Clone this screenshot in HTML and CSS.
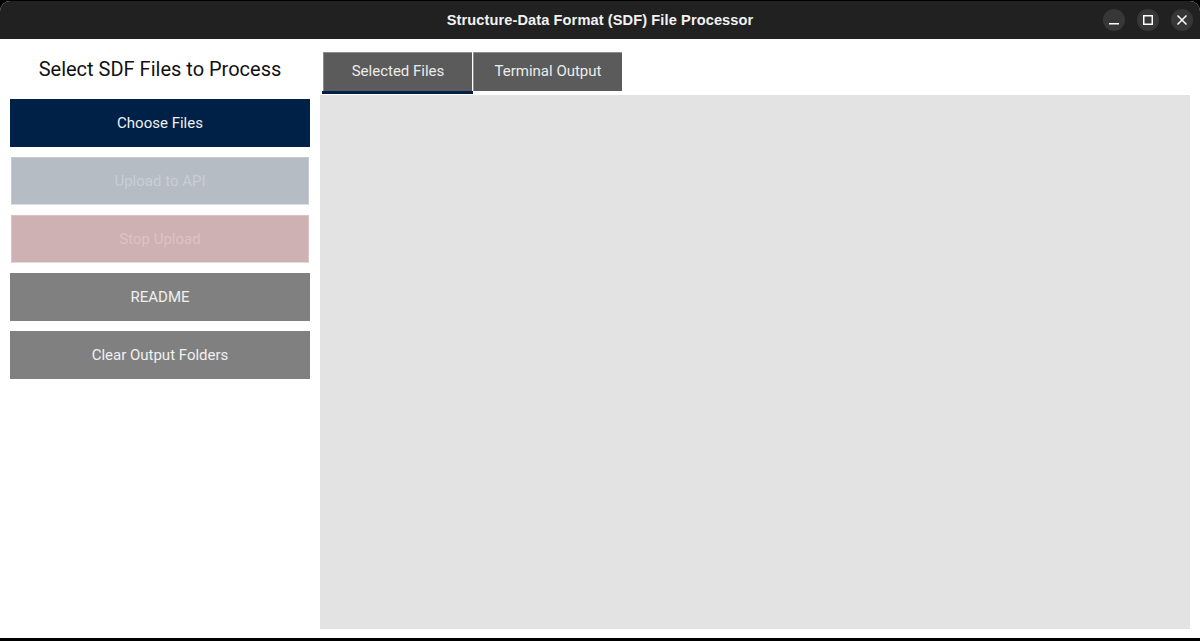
FILE: index.html
```html
<!DOCTYPE html>
<html>
<head>
<meta charset="utf-8">
<link rel="stylesheet" href="styles.css">
</head>
<body>
<div class="window">
  <div class="titlebar">
    <div class="title">Structure-Data Format (SDF) File Processor</div>
    <div class="controls">
      <div class="ctl"><svg width="12" height="12" viewBox="0 0 12 12"><rect x="1" y="9" width="10" height="1.5" fill="#fff"/></svg></div>
      <div class="ctl"><svg width="12" height="12" viewBox="0 0 12 12"><rect x="1.75" y="1.75" width="8.5" height="8.5" fill="none" stroke="#fff" stroke-width="1.5"/></svg></div>
      <div class="ctl"><svg width="12" height="12" viewBox="0 0 12 12"><path d="M1.5 1.5 L10.5 10.5 M10.5 1.5 L1.5 10.5" stroke="#fff" stroke-width="1.5"/></svg></div>
    </div>
  </div>
  <div class="content">
    <div class="sidebar">
      <div class="heading">Select SDF Files to Process</div>
      <div class="btns">
        <div class="btn btn-primary">Choose Files</div>
        <div class="btn btn-upload">Upload to API</div>
        <div class="btn btn-stop">Stop Upload</div>
        <div class="btn btn-gray">README</div>
        <div class="btn btn-gray">Clear Output Folders</div>
      </div>
    </div>
    <div class="main">
      <div class="tabs">
        <div class="tab active">Selected Files</div>
        <div class="tab">Terminal Output</div>
      </div>
      <div class="panel"></div>
    </div>
  </div>
</div>
</body>
</html>
```
FILE: styles.css
```css
html, body {
  margin: 0;
  padding: 0;
  background: #000;
  width: 1200px;
  height: 641px;
  overflow: hidden;
}
.window {
  margin-top: 1px;
  height: 637px;
  display: flex;
  flex-direction: column;
  background: #fff;
  border-radius: 10px 10px 0 0;
  overflow: hidden;
}
.titlebar {
  height: 38px;
  flex: none;
  background: #212121;
  display: flex;
  align-items: center;
  justify-content: center;
  position: relative;
}
.title {
  color: #f2f2f2;
  font-family: "Liberation Sans", sans-serif;
  font-weight: bold;
  font-size: 14.6px;
  letter-spacing: 0.1px;
}
.controls {
  position: absolute;
  right: 7px;
  top: 8px;
  display: flex;
  gap: 12px;
}
.ctl {
  width: 22px;
  height: 22px;
  border-radius: 50%;
  background: #373737;
  display: flex;
  align-items: center;
  justify-content: center;
}
.content {
  flex: 1;
  display: flex;
  background: #fff;
}
.sidebar {
  width: 300px;
  padding: 0 10px;
  flex: none;
  font-family: Roboto, sans-serif;
}
.heading {
  height: 60px;
  display: flex;
  align-items: center;
  justify-content: center;
  font-size: 20px;
  color: #111;
}
.btns {
  display: flex;
  flex-direction: column;
  gap: 10px;
}
.btn {
  height: 48px;
  display: flex;
  align-items: center;
  justify-content: center;
  font-size: 15px;
  color: #f0f0f0;
  box-sizing: border-box;
}
.btn-primary { background: #002147; }
.btn-upload {
  background: #b5bcc4;
  color: #c9cfd5;
  border: 1px solid #c6ccd2;
  border-bottom-color: #dde1e5;
  margin: 0 1px;
}
.btn-stop {
  background: #cdb1b3;
  color: #dbc3c5;
  border: 1px solid #dbc2c4;
  border-bottom-color: #e8dadb;
  margin: 0 1px;
}
.btn-gray { background: #808080; }
.main {
  width: 870px;
  display: flex;
  flex-direction: column;
  font-family: Roboto, sans-serif;
}
.tabs {
  margin-top: 13px;
  display: flex;
  gap: 1px;
  padding-left: 3px;
  height: 43px;
}
.tab {
  width: 149px;
  height: 39px;
  box-sizing: border-box;
  background: #5b5b5b;
  border-top: 1px solid #8d8d8d;
  border-left: 1px solid #8d8d8d;
  color: #ececec;
  font-size: 15px;
  display: flex;
  align-items: center;
  justify-content: center;
  padding-bottom: 2px;
  position: relative;
}
.tab.active::after {
  content: "";
  position: absolute;
  left: -2px;
  right: -1px;
  top: 38px;
  height: 3px;
  background: #002147;
}
.panel {
  height: 534px;
  background: #e3e3e3;
}
```
